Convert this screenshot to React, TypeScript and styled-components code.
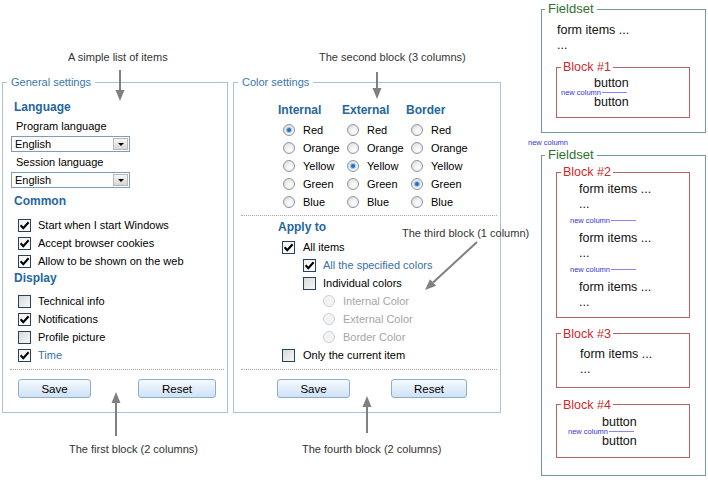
import React from "react";
import styled, { createGlobalStyle } from "styled-components";

const GlobalStyle = createGlobalStyle`
  html, body {
    margin: 0;
    padding: 0;
    background: #fff;
  }
  body {
    font-family: "Liberation Sans", Arial, sans-serif;
    font-size: 11px;
    color: #000;
  }
`;

const Page = styled.div`
  width: 708px;
  height: 480px;
  overflow: hidden;
  box-sizing: border-box;
  padding-left: 2px;
  display: grid;
  grid-template-columns: 226px 268px 202px;
  column-gap: 5px;
`;

const Column = styled.div`
  position: relative;
  display: flex;
  flex-direction: column;
  padding-top: 50px;
`;

const Caption = styled.div<{ $left: number; $top?: number }>`
  padding-left: ${(p) => p.$left}px;
  margin-top: ${(p) => p.$top ?? 0}px;
  font-size: 11px;
  line-height: 14px;
  color: #333;
  white-space: nowrap;
`;

const FloatingCaption = styled.div`
  position: absolute;
  left: 169px;
  top: 226px;
  font-size: 11px;
  line-height: 14px;
  color: #333;
  white-space: nowrap;
`;

const Overlay = styled.svg`
  position: absolute;
  left: 0;
  top: 0;
  width: 100%;
  height: 100%;
  overflow: visible;
  pointer-events: none;
`;

/* ---------- settings panels ---------- */

const Panel = styled.fieldset`
  margin: 11.5px 0 0;
  padding: 0 0 14px;
  border: 1px solid #a9c2d8;
  min-width: 0;
`;

const PanelLegend = styled.legend`
  margin-left: 4px;
  padding: 0 4px;
  font-size: 11px;
  line-height: 13px;
  color: #3a78b0;
`;

const PanelBody = styled.div<{ $top: number }>`
  padding-top: ${(p) => p.$top}px;
  display: flex;
  flex-direction: column;
`;

const SectionTitle = styled.div<{ $left: number; $top?: number }>`
  padding-left: ${(p) => p.$left}px;
  margin-top: ${(p) => p.$top ?? 0}px;
  font-size: 12px;
  font-weight: bold;
  line-height: 16px;
  color: #2466a0;
`;

const FieldLabel = styled.div<{ $top: number }>`
  padding-left: 13px;
  margin-top: ${(p) => p.$top}px;
  line-height: 16px;
`;

const Select = styled.div`
  margin: 2px 0 0 8px;
  width: 119px;
  height: 16px;
  box-sizing: border-box;
  border: 1px solid #7f9db9;
  background: #fff;
  display: flex;
  align-items: center;
  justify-content: space-between;
  padding-left: 3px;
  line-height: 14px;
`;

const DropButton = styled.span`
  width: 15px;
  height: 12px;
  margin-right: 1px;
  box-sizing: border-box;
  border: 1px solid #b8b8b8;
  background: linear-gradient(#f7f7f7, #d6d6d6);
  display: flex;
  align-items: flex-end;
  justify-content: center;
  padding-bottom: 3px;
`;

const DropArrow = styled.span`
  width: 0;
  height: 0;
  border-left: 3px solid transparent;
  border-right: 3px solid transparent;
  border-top: 3px solid #000;
`;

const Rows = styled.div<{ $top: number }>`
  margin-top: ${(p) => p.$top}px;
  display: flex;
  flex-direction: column;
`;

const OptionRow = styled.div<{ $indent: number; $gap: number }>`
  display: flex;
  align-items: center;
  height: 18px;
  padding-left: ${(p) => p.$indent}px;
  gap: ${(p) => p.$gap}px;
  white-space: nowrap;
`;

const OptionText = styled.span<{ $tone?: "blue" | "muted" }>`
  line-height: 14px;
  color: ${(p) =>
    p.$tone === "blue" ? "#3a6fa6" : p.$tone === "muted" ? "#a6a6a6" : "#000"};
`;

const Box = styled.span<{ $checked: boolean }>`
  width: 13px;
  height: 13px;
  flex: none;
  box-sizing: border-box;
  border: 1px solid #25435f;
  background: ${(p) =>
    p.$checked
      ? "linear-gradient(135deg, #f1f1f1, #ffffff)"
      : "linear-gradient(135deg, #d9d9d9, #f7f7f7)"};
  display: flex;
  align-items: center;
  justify-content: center;
`;

const Radio = styled.span<{ $disabled?: boolean }>`
  width: 12px;
  height: 12px;
  flex: none;
  box-sizing: border-box;
  border-radius: 50%;
  border: 1px solid ${(p) => (p.$disabled ? "#ccd2d8" : "#8b96a2")};
  background: ${(p) =>
    p.$disabled
      ? "#f3f3f3"
      : "radial-gradient(circle at 60% 65%, #ffffff 0, #f1f1f1 40%, #d4d4d4 100%)"};
  display: flex;
  align-items: center;
  justify-content: center;
`;

const RadioDot = styled.span`
  width: 4px;
  height: 4px;
  border-radius: 50%;
  background: #1f74bd;
  box-shadow: 0 0 0 1px #9ac4e6;
`;

const Separator = styled.div<{ $top?: number }>`
  margin: ${(p) => p.$top ?? 5}px 3px 0 7px;
  border-top: 1px dotted #a8a8a8;
`;

const ButtonRow = styled.div<{ $left: number; $gap: number }>`
  display: flex;
  margin-top: 9px;
  padding-left: ${(p) => p.$left}px;
  gap: ${(p) => p.$gap}px;
`;

const Button = styled.button<{ $w: number }>`
  width: ${(p) => p.$w}px;
  height: 19px;
  padding: 0;
  box-sizing: border-box;
  border: 1px solid #8eadcc;
  border-radius: 3px;
  background: linear-gradient(#f5f9fe, #cfe2f6);
  font-family: "Liberation Sans", Arial, sans-serif;
  font-size: 11.5px;
  color: #000;
`;

const ColorGrid = styled.div`
  display: grid;
  grid-template-columns: repeat(3, 64px);
  margin-left: 44px;
`;

const ColorColumn = styled.div`
  display: flex;
  flex-direction: column;
`;

const ApplySection = styled.div`
  margin: 3px 0 0 44px;
  display: flex;
  flex-direction: column;
`;

/* ---------- diagram ---------- */

const DiagramColumn = styled.div`
  display: flex;
  flex-direction: column;
  padding-top: 2px;
`;

const Outer = styled.fieldset<{ $bottom: number }>`
  margin: 0 2px 0 35px;
  padding: 0 0 ${(p) => p.$bottom}px;
  border: 1px solid #6f9898;
  min-width: 0;
`;

const OuterLegend = styled.legend`
  margin-left: 3px;
  padding: 0 3px;
  font-size: 13px;
  line-height: 14px;
  color: #2f6f2f;
`;

const Block = styled.fieldset<{ $top: number; $bottom: number }>`
  margin: ${(p) => p.$top}px 15px 0 14px;
  padding: 0 0 ${(p) => p.$bottom}px;
  border: 1px solid #b36363;
  min-width: 0;
`;

const BlockLegend = styled.legend`
  margin-left: 4px;
  padding: 0 2px;
  font-size: 12.5px;
  line-height: 14px;
  color: #c92a2a;
`;

const DiagramText = styled.div<{ $left: number; $top?: number }>`
  padding-left: ${(p) => p.$left}px;
  margin-top: ${(p) => p.$top ?? 0}px;
  font-size: 12.5px;
  line-height: 15px;
  color: #111;
  white-space: nowrap;
`;

const Spacer = styled.div<{ $h: number }>`
  height: ${(p) => p.$h}px;
`;

const Divider = styled.div<{ $left: number; $margin?: string }>`
  display: flex;
  align-items: center;
  gap: 1px;
  height: 4px;
  padding-left: ${(p) => p.$left}px;
  margin: ${(p) => p.$margin ?? "0"};
`;

const DividerLabel = styled.span`
  font-size: 7.5px;
  line-height: 8px;
  color: #3535e0;
  white-space: nowrap;
`;

const DividerLine = styled.span`
  width: 25px;
  height: 1px;
  background: #8686f4;
`;

const NewColumnNote = styled.div`
  height: 15px;
  box-sizing: border-box;
  padding: 4px 0 0 22px;
  font-size: 7.5px;
  line-height: 11px;
  color: #3535e0;
`;

/* ---------- small parts ---------- */

const Arrow = ({ x1, y1, x2, y2 }: { x1: number; y1: number; x2: number; y2: number }) => {
  const dx = x2 - x1;
  const dy = y2 - y1;
  const len = Math.hypot(dx, dy);
  const ux = dx / len;
  const uy = dy / len;
  const bx = x2 - ux * 11;
  const by = y2 - uy * 11;
  const px = -uy * 4.5;
  const py = ux * 4.5;
  return (
    <g>
      <line x1={x1} y1={y1} x2={bx} y2={by} stroke="#808080" strokeWidth={2} />
      <polygon
        points={`${x2},${y2} ${bx + px},${by + py} ${bx - px},${by - py}`}
        fill="#808080"
      />
    </g>
  );
};

const Check = ({
  label,
  checked = false,
  indent,
  gap = 7,
  tone,
}: {
  label: string;
  checked?: boolean;
  indent: number;
  gap?: number;
  tone?: "blue" | "muted";
}) => (
  <OptionRow $indent={indent} $gap={gap}>
    <Box $checked={checked}>
      {checked && (
        <svg width="11" height="11" viewBox="0 0 11 11">
          <path d="M1.6 5.2 L4.3 8.2 L9.6 2.2" fill="none" stroke="#000" strokeWidth="2.1" />
        </svg>
      )}
    </Box>
    <OptionText $tone={tone}>{label}</OptionText>
  </OptionRow>
);

const RadioOption = ({
  label,
  selected = false,
  disabled = false,
  indent,
}: {
  label: string;
  selected?: boolean;
  disabled?: boolean;
  indent: number;
}) => (
  <OptionRow $indent={indent} $gap={8}>
    <Radio $disabled={disabled}>{selected && <RadioDot />}</Radio>
    <OptionText $tone={disabled ? "muted" : undefined}>{label}</OptionText>
  </OptionRow>
);

const LanguageSelect = () => (
  <Select>
    <span>English</span>
    <DropButton>
      <DropArrow />
    </DropButton>
  </Select>
);

const colors = ["Red", "Orange", "Yellow", "Green", "Blue"];
const colorColumns = [
  { title: "Internal", selected: "Red" },
  { title: "External", selected: "Yellow" },
  { title: "Border", selected: "Green" },
];

const GeneralSettings = () => (
  <Panel>
    <PanelLegend>General settings</PanelLegend>
    <PanelBody $top={10}>
      <SectionTitle $left={11}>Language</SectionTitle>
      <FieldLabel $top={3.5}>Program language</FieldLabel>
      <LanguageSelect />
      <FieldLabel $top={2}>Session language</FieldLabel>
      <LanguageSelect />
      <SectionTitle $left={11} $top={5}>
        Common
      </SectionTitle>
      <Rows $top={7}>
        <Check indent={15} checked label="Start when I start Windows" />
        <Check indent={15} checked label="Accept browser cookies" />
        <Check indent={15} checked label="Allow to be shown on the web" />
      </Rows>
      <SectionTitle $left={11}>Display</SectionTitle>
      <Rows $top={6}>
        <Check indent={15} label="Technical info" />
        <Check indent={15} checked label="Notifications" />
        <Check indent={15} label="Profile picture" />
        <Check indent={15} checked tone="blue" label="Time" />
      </Rows>
      <Separator />
      <ButtonRow $left={15} $gap={47}>
        <Button $w={73}>Save</Button>
        <Button $w={78}>Reset</Button>
      </ButtonRow>
    </PanelBody>
  </Panel>
);

const ColorSettings = () => (
  <Panel>
    <PanelLegend>Color settings</PanelLegend>
    <PanelBody $top={13.5}>
      <ColorGrid>
        {colorColumns.map((col) => (
          <ColorColumn key={col.title}>
            <SectionTitle $left={0}>{col.title}</SectionTitle>
            <Rows $top={3}>
              {colors.map((c) => (
                <RadioOption key={c} indent={5} label={c} selected={c === col.selected} />
              ))}
            </Rows>
          </ColorColumn>
        ))}
      </ColorGrid>
      <Separator $top={4} />
      <ApplySection>
        <SectionTitle $left={0}>Apply to</SectionTitle>
        <Rows $top={3}>
          <Check indent={4} gap={8} checked label="All items" />
          <Check indent={25} gap={7} checked tone="blue" label="All the specified colors" />
          <Check indent={25} gap={7} label="Individual colors" />
          <RadioOption indent={45} disabled label="Internal Color" />
          <RadioOption indent={45} disabled label="External Color" />
          <RadioOption indent={45} disabled label="Border Color" />
          <Check indent={4} gap={8} label="Only the current item" />
        </Rows>
      </ApplySection>
      <Separator />
      <ButtonRow $left={43} $gap={41}>
        <Button $w={73}>Save</Button>
        <Button $w={76}>Reset</Button>
      </ButtonRow>
    </PanelBody>
  </Panel>
);

const ButtonPair = ({ button, label }: { button: number; label: number }) => (
  <>
    <DiagramText $left={button}>button</DiagramText>
    <Divider $left={label}>
      <DividerLabel>new column</DividerLabel>
      <DividerLine />
    </Divider>
    <DiagramText $left={button}>button</DiagramText>
  </>
);

const FormItems = ({ left, top }: { left: number; top?: number }) => (
  <>
    <DiagramText $left={left} $top={top}>
      form items ...
    </DiagramText>
    <DiagramText $left={left}>...</DiagramText>
  </>
);

const ColumnBreak = ({ left }: { left: number }) => (
  <Divider $left={left} $margin="7px 0 8px">
    <DividerLabel>new column</DividerLabel>
    <DividerLine />
  </Divider>
);

const StructureDiagram = () => (
  <DiagramColumn>
    <Outer $bottom={14}>
      <OuterLegend>Fieldset</OuterLegend>
      <FormItems left={15} top={6.5} />
      <Block $top={7.5} $bottom={7.5}>
        <BlockLegend>Block #1</BlockLegend>
        <Spacer $h={1.5} />
        <ButtonPair button={37} label={4} />
      </Block>
    </Outer>
    <NewColumnNote>new column</NewColumnNote>
    <Outer $bottom={17}>
      <OuterLegend>Fieldset</OuterLegend>
      <Block $top={3} $bottom={7}>
        <BlockLegend>Block #2</BlockLegend>
        <FormItems left={22} top={2.5} />
        <ColumnBreak left={13} />
        <FormItems left={22} />
        <ColumnBreak left={13} />
        <FormItems left={22} />
      </Block>
      <Block $top={9} $bottom={10}>
        <BlockLegend>Block #3</BlockLegend>
        <FormItems left={23} top={6} />
      </Block>
      <Block $top={10} $bottom={8}>
        <BlockLegend>Block #4</BlockLegend>
        <Spacer $h={3} />
        <ButtonPair button={45} label={11} />
      </Block>
    </Outer>
  </DiagramColumn>
);

const App = () => (
  <>
    <GlobalStyle />
    <Page>
      <Column>
        <Caption $left={66}>A simple list of items</Caption>
        <GeneralSettings />
        <Caption $left={67} $top={29}>
          The first block (2 columns)
        </Caption>
        <Overlay>
          <Arrow x1={118} y1={70} x2={118} y2={101} />
          <Arrow x1={114} y1={436} x2={114} y2={392} />
        </Overlay>
      </Column>
      <Column>
        <Caption $left={86}>The second block (3 columns)</Caption>
        <ColorSettings />
        <Caption $left={69} $top={29}>
          The fourth block (2 columns)
        </Caption>
        <FloatingCaption>The third block (1 column)</FloatingCaption>
        <Overlay>
          <Arrow x1={144} y1={72} x2={144} y2={99} />
          <Arrow x1={134} y1={433} x2={134} y2={396} />
          <Arrow x1={244} y1={242} x2={192} y2={290} />
        </Overlay>
      </Column>
      <StructureDiagram />
    </Page>
  </>
);

export default App;
